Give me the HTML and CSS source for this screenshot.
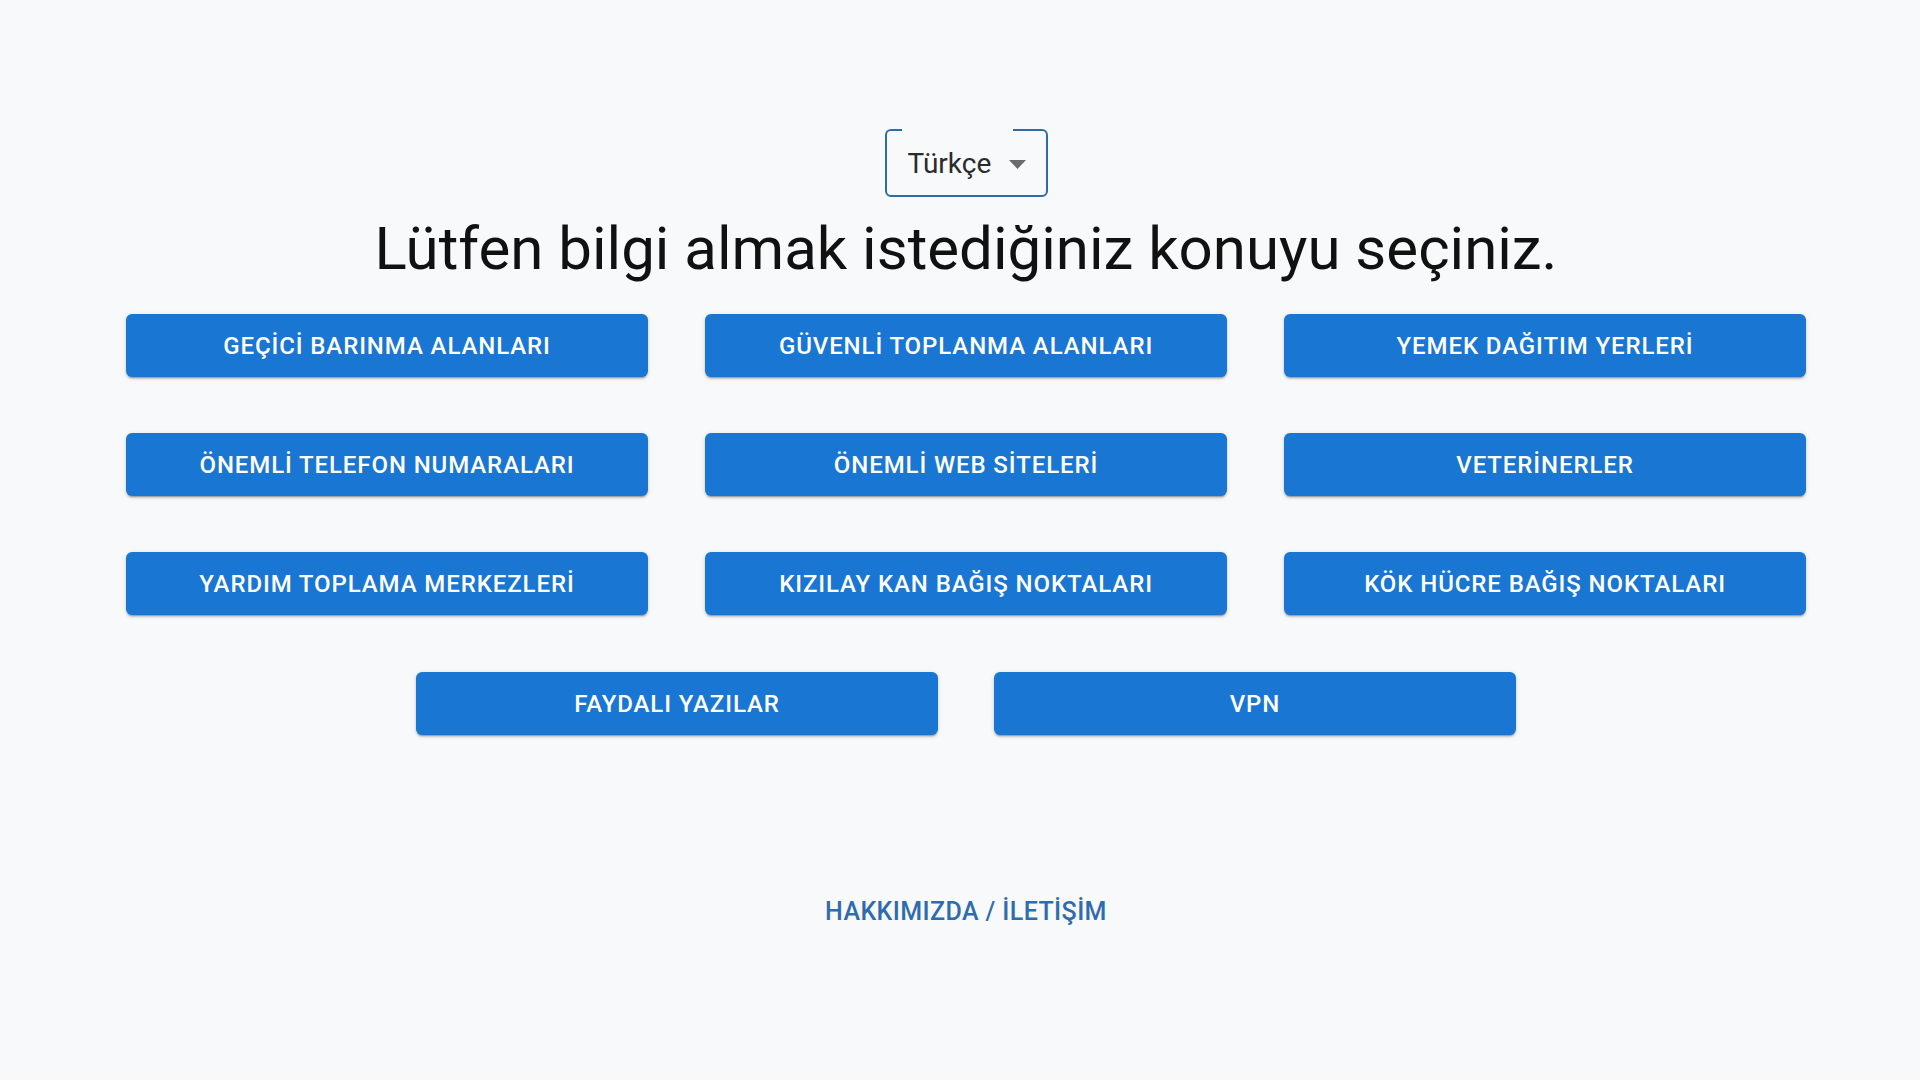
FILE: index.html
```html
<!DOCTYPE html>
<html lang="tr">
<head>
<meta charset="utf-8">
<title>Bilgi</title>
<link rel="stylesheet" href="styles.css">
</head>
<body>
<div class="page">
  <div class="select-wrap">
    <div class="select">
      <span class="select-value">Türkçe</span>
      <svg class="select-arrow" width="17" height="9" viewBox="0 0 17 9"><polygon points="0,0 17,0 8.5,9" fill="#6b6b6b"/></svg>
    </div>
  </div>
  <h1 class="title">Lütfen bilgi almak istediğiniz konuyu seçiniz.</h1>
  <div class="grid">
    <a class="btn">GEÇİCİ BARINMA ALANLARI</a>
    <a class="btn">GÜVENLİ TOPLANMA ALANLARI</a>
    <a class="btn">YEMEK DAĞITIM YERLERİ</a>
    <a class="btn">ÖNEMLİ TELEFON NUMARALARI</a>
    <a class="btn">ÖNEMLİ WEB SİTELERİ</a>
    <a class="btn">VETERİNERLER</a>
    <a class="btn">YARDIM TOPLAMA MERKEZLERİ</a>
    <a class="btn">KIZILAY KAN BAĞIŞ NOKTALARI</a>
    <a class="btn">KÖK HÜCRE BAĞIŞ NOKTALARI</a>
  </div>
  <div class="row-last">
    <a class="btn">FAYDALI YAZILAR</a>
    <a class="btn">VPN</a>
  </div>
  <div class="footer">
    <a class="footer-link">HAKKIMIZDA / İLETİŞİM</a>
  </div>
</div>
</body>
</html>
```

FILE: styles.css
```css
html, body {
  margin: 0;
  padding: 0;
  background: #f8f9fa;
}
body {
  font-family: Roboto, "Noto Sans", sans-serif;
  height: 1080px;
  overflow: hidden;
}
.page {
  padding-left: 12px;
  padding-top: 129px;
  display: flex;
  flex-direction: column;
  align-items: center;
}
.select-wrap {
  display: flex;
  justify-content: center;
}
.select {
  position: relative;
  box-sizing: border-box;
  width: 163px;
  height: 68px;
  border: 2.5px solid #2f6ca6;
  border-radius: 6px;
  display: flex;
  align-items: center;
  padding-left: 21px;
  padding-right: 20px;
  justify-content: space-between;
}
.select::before {
  content: "";
  position: absolute;
  top: -2.5px;
  left: 15px;
  width: 111px;
  height: 2.5px;
  background: #f8f9fa;
}
.select-value {
  font-size: 28px;
  color: #2b2b2b;
}
.select-arrow {
  display: block;
  margin-top: 2px;
}
.title {
  margin: 16px 0 0 0;
  font-size: 60px;
  line-height: 72px;
  font-weight: 400;
  color: #111;
  text-align: center;
}
.grid {
  margin-top: 29px;
  display: grid;
  grid-template-columns: repeat(3, 522px);
  column-gap: 57px;
  row-gap: 56px;
}
.row-last {
  margin-top: 57px;
  display: flex;
  gap: 56px;
}
.btn {
  box-sizing: border-box;
  width: 522px;
  height: 63px;
  display: flex;
  align-items: center;
  justify-content: center;
  background: #1976d2;
  color: #fff;
  border-radius: 6px;
  font-size: 24px;
  font-weight: 500;
  letter-spacing: 0.9px;
  box-shadow: 0 3px 1px -2px rgba(0,0,0,0.2), 0 2px 2px 0 rgba(0,0,0,0.14), 0 1px 5px 0 rgba(0,0,0,0.12);
}
.footer {
  margin-top: 162px;
}
.footer-link {
  font-size: 25px;
  font-weight: 500;
  color: #2f6cae;
  letter-spacing: 0.4px;
}
```
